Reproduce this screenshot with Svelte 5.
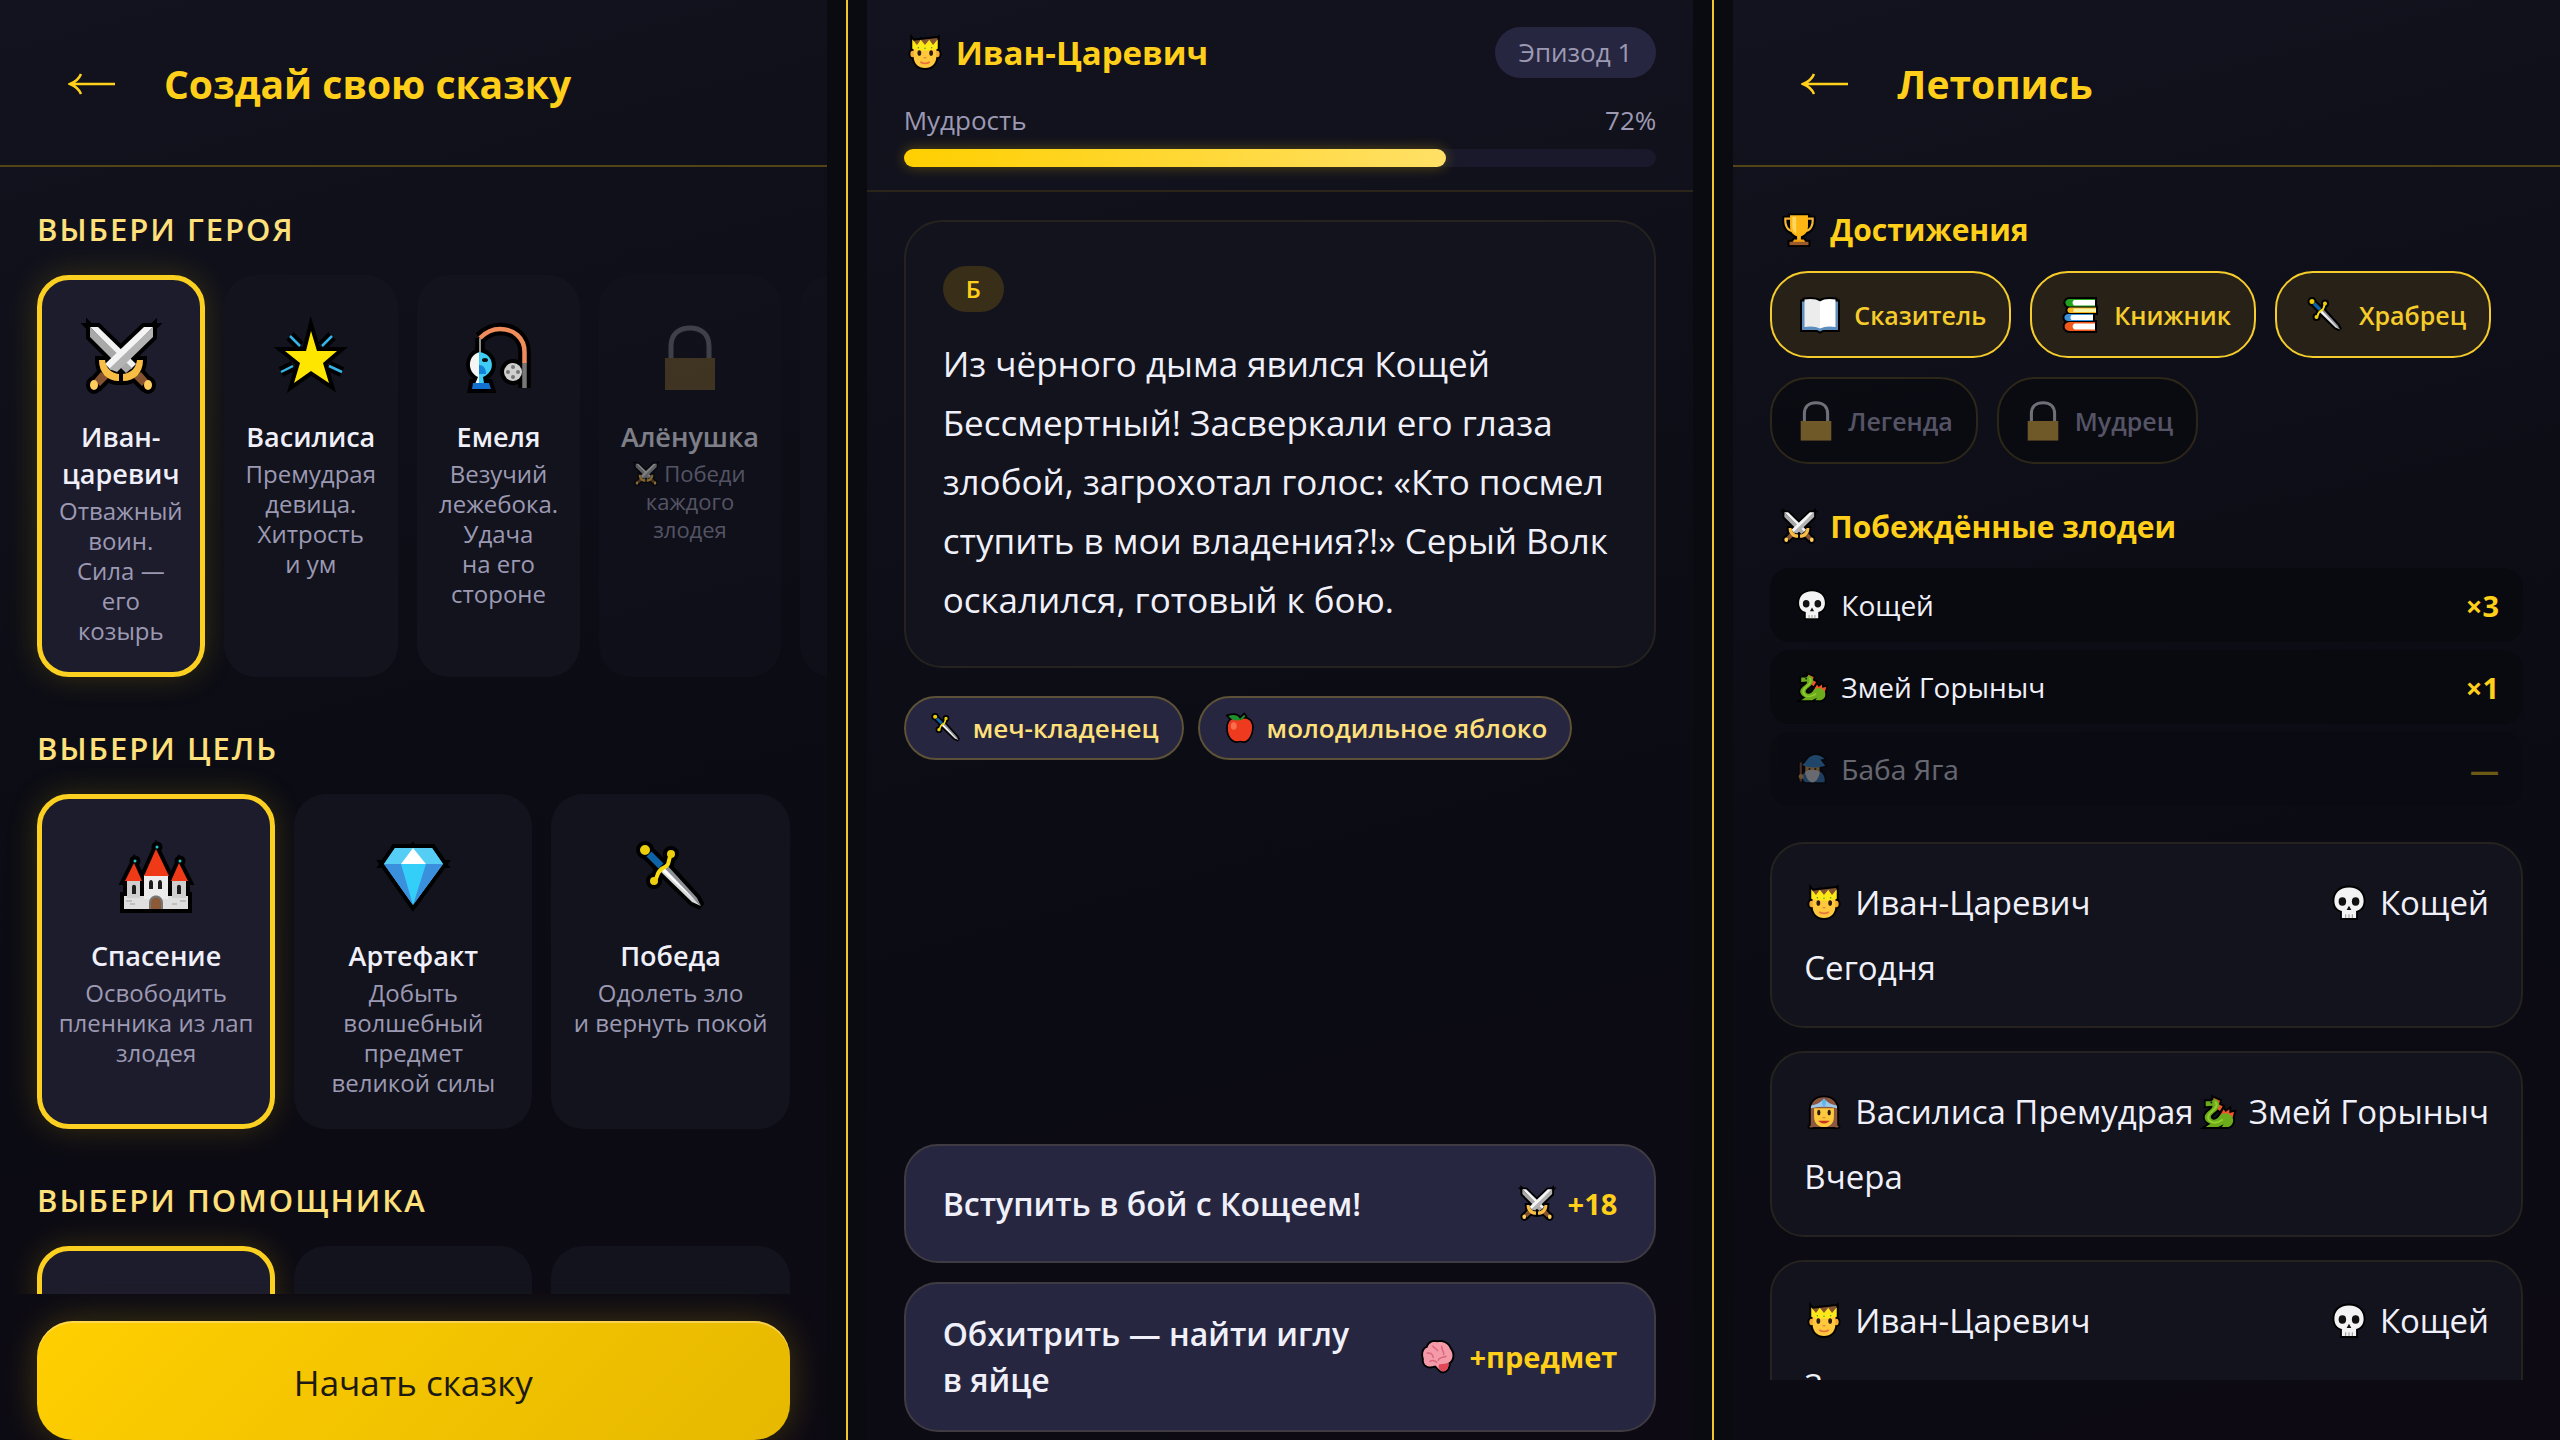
<script>
  const dot = (x, y, rx, ry = rx) =>
    `M${x - rx} ${y}a${rx} ${ry} 0 1 0 ${rx * 2} 0a${rx} ${ry} 0 1 0 ${-rx * 2} 0Z`;

  // every icon is a list of shapes on a 72x72 grid; "w" makes a shape a stroke
  const icons = {
    swords: [
      { d: "M5 5H13L51 42L46 47Z", c: "#f1f1f1" },
      { d: "M5 5L47 46L41 51L5 15Z", c: "#a9a9a9" },
      { d: "M68 5H59L20 42L26 48Z", c: "#f4f4f4" },
      { d: "M68 5V15L32 50L24 47Z", c: "#b3b3b3" },
      { d: "M16 50L23 56L15 64L9 58Z", c: "#85532f" },
      { d: "M56 50L49 56L57 64L63 58Z", c: "#85532f" },
      { d: "M14 38H20C21 46 26 51 34 52V59C22 59 14 51 14 38Z", c: "#f8bd45" },
      { d: "M58 38H52C51 46 46 51 38 52V59C50 59 58 51 58 38Z", c: "#f8bd45" },
      { d: dot(9, 63, 4, 5), c: "#ffce5c" },
      { d: dot(63, 63, 4, 5), c: "#ffce5c" },
    ],
    star: [
      { d: "M36 9L42 29H62L48 41L54 61L36 49L19 61L25 41L10 29H31Z", c: "#ffe600" },
      { d: "M15 14L25 24M57 14L47 24M6 50L18 44M67 50L54 44", c: "#35b4e6", w: 2.5 },
    ],
    fishing: [
      { d: "M17 16V32", c: "#bdbdbd", w: 1.5 },
      { d: "M17 16C24 9 31 7 37 7C51 7 61.500 16 61.500 30V41", c: "#f08d5a", w: 4.5 },
      { d: "M61.500 41V66", c: "#777", w: 4.5 },
      { d: "M17 30C4 33 4 50 15 55L10 67H17Z", c: "#f5f5f5" },
      { d: "M16 30C32 32 33 50 20 55L22 67H16Z", c: "#3fcdf6" },
      { d: "M10 61H26L28 67H9Z", c: "#1370ce" },
      { d: "M16 52V43C20 43 23 46 23 52Z", c: "#1283d8" },
      { d: dot(22, 38, 3, 2), c: "#111" },
      { d: dot(50, 50, 9), c: "#cfcfcf" },
      { d: dot(50, 45, 2) + dot(50, 55, 2) + dot(45, 50, 2) + dot(55, 50, 2), c: "#767676" },
    ],
    lock: [
      { d: "M17 37V24C17 12 25 6 36 6C47 6 55 12 55 24V37", c: "#cfcfd6", w: 5 },
      { d: "M11 36H61V68H11Z", c: "#d1a239" },
    ],
    castle: [
      { d: "M4 55H68V68H4Z", c: "#dfdfdf" },
      { d: "M7 39H20V57H7ZM52 39H66V57H52Z", c: "#cfcfcf" },
      { d: "M24 34H48V58H24Z", c: "#ececec" },
      { d: "M36 8L49 35H24Z", c: "#f03a17" },
      { d: "M14 22L22 40H5ZM59 22L68 40H51Z", c: "#f03a17" },
      { d: "M29 68V62C29 52 43 52 43 62V68Z", c: "#777" },
      { d: "M31 68V62C31 55 41 55 41 62V68Z", c: "#8d5a38" },
      { d: "M29 48V42C29 38 33 38 33 42V48ZM38 48V42C38 38 42 38 42 42V48ZM12 53V46C12 43 16 43 16 46V53ZM57 53V46C57 43 61 43 61 46V53Z", c: "#1c1c1c" },
      { d: dot(37, 6, 1.5) + dot(15, 20, 1.5) + dot(60, 20, 1.5), c: "#2bc4c9" },
      { d: "M6 60H12M10 63H15M52 63H57M60 60H66", c: "#b5b5b5", w: 1.5 },
    ],
    gem: [
      { d: "M18 7H55L66 23L36 64L7 23Z", c: "#33cff8" },
      { d: "M18 7H36L24 23H7ZM36 7H55L66 23H49Z", c: "#55cdf4" },
      { d: "M36 7L49 23H24Z", c: "#fff" },
      { d: "M7 23H24L36 64ZM66 23H49L36 64Z", c: "#3b90dd" },
    ],
    dagger: [
      { d: "M24 29L27 26L66 65L57 61Z", c: "#d9d9d9" },
      { d: "M27 26L31 23L62 57L66 65Z", c: "#8d9096" },
      { d: "M25 28L28 25.500L62 61Z", c: "#fff" },
      { d: "M14 13L26 25", c: "#0e62a6", w: 7 },
      { d: "M36 14C32 20 36 24 28 27C21 31 24 34 20 39", c: "#f8dc12", w: 4 },
      { d: dot(10, 9, 5) + dot(36, 13, 4) + dot(19, 40, 4), c: "#ecce0c" },
    ],
    prince: [
      { d: "M11 10L62 4L60 40H12Z", c: "#85552f" },
      { d: dot(10, 38, 5, 7) + dot(62, 38, 5, 7), c: "#f2ab35" },
      { d: "M12 24H60V44C60 58 50 68 36 68S12 58 12 44Z", c: "#ffc83d" },
      { d: "M9 7L19 19L27 8L36 19L45 8L53 19L63 7V27C46 32 26 32 9 27Z", c: "#ffe817" },
      { d: dot(22, 25, 1.5) + dot(36, 26, 1.5) + dot(50, 25, 1.5), c: "#16a34a" },
      { d: dot(24, 36, 4, 6) + dot(49, 36, 4, 6), c: "#2b1a12" },
      { d: "M33 46H39", c: "#e08a3c", w: 3 },
      { d: "M26 55Q36 61 46 55", c: "#e8743b", w: 4 },
    ],
    princess: [
      { d: "M8 64V32C8 14 20 5 36 5S64 14 64 32V64C70 67 66 70 58 68H14C6 70 2 67 8 64Z", c: "#8b5740" },
      { d: "M15 28H57V46C57 60 48 68 36 68S15 60 15 46Z", c: "#ffc83d" },
      { d: "M9 22Q24 20 31 12H41Q48 20 63 22L64 28Q36 22 8 28Z", c: "#9cc7ea" },
      { d: dot(36, 16, 4, 8), c: "#5eb6ee" },
      { d: dot(25, 37, 3.5, 6) + dot(47, 37, 3.5, 6), c: "#2b1a12" },
      { d: "M33 48H39", c: "#e08a3c", w: 3 },
      { d: "M28 56Q36 62 44 56Z", c: "#c8321f", w: 3 },
    ],
    skull: [
      { d: "M36 3C16 3 5 15 5 31C5 43 11 50 21 53V68H51V53C61 50 67 43 67 31C67 15 56 3 36 3Z", c: "#f3f3f3" },
      { d: dot(22, 33, 8, 9) + dot(50, 33, 8, 9) + "M36 42L41 51H31Z", c: "#111" },
      { d: "M29 60V68M36 60V68M43 60V68", c: "#8a8a8a", w: 2 },
    ],
    dragon: [
      { d: "M26 6L40 12L38 20L46 24L40 34L30 26ZM40 44L48 30L52 36L60 30L60 38L70 36L67 48Z", c: "#f2552c" },
      { d: "M10 13H22L28 8C40 12 42 24 33 33C25 40 18 44 22 50C28 56 36 50 40 43C48 35 62 38 67 48C71 58 64 68 54 68H44L48 62L36 68H10L20 61C8 56 4 46 12 38C18 32 26 28 24 23L10 24Z", c: "#6cab1c" },
      { d: "M30 14C36 20 32 28 24 34C14 41 12 50 20 56C28 61 38 58 46 52", c: "#92cf2b", w: 4 },
      { d: dot(22, 16, 2), c: "#111" },
    ],
    wizard: [
      { d: "M24 68C10 68 10 46 22 42H54C64 46 68 58 66 68Z", c: "#3f86cf" },
      { d: "M20 28H54V50H20Z", c: "#f2b65c" },
      { d: "M12 26C22 22 24 8 36 4C46 0 58 4 66 12L56 13C60 18 64 24 68 28C50 34 26 34 12 26Z", c: "#3f9ae6" },
      { d: "M20 42Q37 34 54 42C54 58 44 68 37 68S20 58 20 42Z", c: "#f4f6f8" },
      { d: dot(30, 36, 2.5) + dot(44, 36, 2.5), c: "#2b1a12" },
      { d: "M9 20V66", c: "#b0603c", w: 5 },
      { d: dot(10, 54, 6), c: "#f2b65c" },
    ],
    trophy: [
      { d: "M19 12H7C6 28 12 37 24 39M53 12H65C66 28 60 37 48 39", c: "#f5b53a", w: 4.5 },
      { d: "M17 5H55V28C55 42 46 48 40 49V58H32V49C26 48 17 42 17 28Z", c: "#fdb614" },
      { d: "M22 8H30V44C24 40 22 34 22 28Z", c: "#ffd75e" },
      { d: "M26 56H46L50 62H22Z", c: "#f0a010" },
      { d: "M16 61H56V68H16Z", c: "#9a5a2c" },
    ],
    book: [
      { d: "M0 9H72V66H42L36 69L30 66H0Z", c: "#5c8fbf" },
      { d: "M5 5Q26 2 36 9V63Q24 57 5 60Z", c: "#ececec" },
      { d: "M67 5Q46 2 36 9V63Q48 57 67 60Z", c: "#fff" },
    ],
    books: [
      { d: "M66 4H15C4 4 4 19 15 19H66Z", c: "#22a31f" },
      { d: "M66 6H24C20 9 20 14 24 17H66Z", c: "#fff" },
      { d: "M68 21H16C9 22 9 31 16 32H68Z", c: "#f5b622" },
      { d: "M68 23H23V30H68Z", c: "#f7f3a8" },
      { d: "M62 34H13C2 34 2 48 13 48H62Z", c: "#3b93dc" },
      { d: "M62 36H19C16 39 16 43 19 46H62Z", c: "#fff" },
      { d: "M66 50H15C2 50 2 68 15 68H66Z", c: "#f0591b" },
      { d: "M66 53H25C20 56 20 62 25 65H66Z", c: "#fff" },
    ],
    apple: [
      { d: "M36 16C52 8 66 18 65 36C64 54 54 69 44 68C40 66 34 66 30 68C18 69 6 54 7 36C6 18 20 8 36 16Z", c: "#ee3b1f" },
      { d: dot(21, 31, 7, 9), c: "#f86f4e" },
      { d: "M37 16C30 20 16 18 8 7C20 3 32 4 37 16ZM36 14L46 4L49 8L39 18Z", c: "#1f8f2e" },
    ],
    brain: [
      { d: "M34 5C46 2 58 8 61 18C70 28 68 44 58 48C60 60 52 68 44 66C36 62 34 56 30 54C14 60 4 52 6 40C2 28 6 18 14 16C16 6 26 2 34 5Z", c: "#f59aa8" },
      { d: "M38 52C46 50 54 50 58 48C60 60 52 68 44 66C38 62 36 58 38 52Z", c: "#e0485a" },
      { d: "M24 12C28 18 34 18 36 24M44 12C42 20 50 24 48 32M12 28C20 26 26 30 26 38M36 44C38 36 46 38 54 34M18 46C24 42 30 44 34 48", c: "#d9687c", w: 3 },
    ],
    wolf: [
      { d: "M16 9L26 20H46L56 9L64 40L36 68L8 40Z", c: "#8a9199" },
    ],
    horse: [
      { d: "M38 9L52 18L60 46L46 68H26L16 40Z", c: "#8a9199" },
    ],
    cat: [
      { d: "M14 18L28 24H44L58 18V50L36 68L12 50Z", c: "#8a9199" },
    ],
  };

  const heroes = [
    { icon: "swords", name: "Иван-царевич", text: "Отважный воин. Сила — его козырь" },
    { icon: "star", name: "Василиса", text: "Премудрая девица. Хитрость и\u00a0ум" },
    { icon: "fishing", name: "Емеля", text: "Везучий лежебока. Удача на\u00a0его стороне" },
    { icon: "lock", name: "Алёнушка", text: "Победи каждого злодея", locked: true },
    { icon: "lock", locked: true },
  ];

  const goals = [
    { icon: "castle", name: "Спасение", text: "Освободить пленника из лап злодея" },
    { icon: "gem", name: "Артефакт", text: "Добыть волшебный предмет великой силы" },
    { icon: "dagger", name: "Победа", text: "Одолеть зло и\u00a0вернуть покой" },
  ];

  const helpers = [{ icon: "wolf" }, { icon: "horse" }, { icon: "cat" }];

  const items = [
    { icon: "dagger", name: "меч-кладенец" },
    { icon: "apple", name: "молодильное яблоко" },
  ];

  const actions = [
    { text: "Вступить в бой с Кощеем!", icon: "swords", bonus: "+18" },
    { text: "Обхитрить — найти иглу в\u00a0яйце", icon: "brain", bonus: "+предмет" },
  ];

  const achievements = [
    { icon: "book", name: "Сказитель" },
    { icon: "books", name: "Книжник" },
    { icon: "dagger", name: "Храбрец" },
    { icon: "lock", name: "Легенда", locked: true },
    { icon: "lock", name: "Мудрец", locked: true },
  ];

  const villains = [
    { icon: "skull", name: "Кощей", count: 3 },
    { icon: "dragon", name: "Змей Горыныч", count: 1 },
    { icon: "wizard", name: "Баба Яга", count: 0 },
  ];

  const tales = [
    { hero: "Иван-Царевич", heroIcon: "prince", villain: "Кощей", villainIcon: "skull", date: "Сегодня" },
    { hero: "Василиса Премудрая", heroIcon: "princess", villain: "Змей Горыныч", villainIcon: "dragon", date: "Вчера" },
    { hero: "Иван-Царевич", heroIcon: "prince", villain: "Кощей", villainIcon: "skull", date: "3 дня назад" },
  ];

  let wisdom = $state(72);
  let hero = $state(0);
  let goal = $state(0);
  let helper = $state(0);
</script>

{#snippet icon(name, size)}
  <svg class="icon {size}" viewBox="0 0 72 72" aria-hidden="true">
    {#if name !== "lock"}
      {#each icons[name] as s}
        <path d={s.d} fill={s.w ? "none" : "#000"} stroke="#000" stroke-width={(s.w || 0) + 8} />
      {/each}
    {/if}
    {#each icons[name] as s}
      <path d={s.d} fill={s.w ? "none" : s.c} stroke={s.w ? s.c : "none"} stroke-width={s.w} />
    {/each}
  </svg>
{/snippet}

{#snippet backArrow()}
  <button class="back" aria-label="Назад">
    <svg viewBox="0 0 48 24" aria-hidden="true">
      <path d="M47 12H3M13 2C11 7 7 10 2 12C7 14 11 17 13 22" />
    </svg>
  </button>
{/snippet}

{#snippet card(item, selected, pick)}
  <button class="card" class:selected class:locked={item.locked} disabled={item.locked} aria-pressed={selected} onclick={pick}>
    <span class="card-icon">{@render icon(item.icon, "xl")}</span>
    {#if item.name}
      <span class="card-name">{item.name}</span>
      <span class="card-text">
        {#if item.locked}{@render icon("swords", "xs")}{/if}
        {item.text}
      </span>
    {/if}
  </button>
{/snippet}

<main class="screens">
  <section class="panel">
    <header class="topbar">
      {@render backArrow()}
      <h1>Создай свою сказку</h1>
    </header>

    <div class="scroll create">
      <div class="group">
        <h2>Выбери героя</h2>
        <div class="heroes">
          {#each heroes as item, i}
            {@render card(item, hero === i, () => (hero = i))}
          {/each}
        </div>
      </div>
      <div class="group">
        <h2>Выбери цель</h2>
        <div class="choices">
          {#each goals as item, i}
            {@render card(item, goal === i, () => (goal = i))}
          {/each}
        </div>
      </div>
      <div class="group">
        <h2>Выбери помощника</h2>
        <div class="choices">
          {#each helpers as item, i}
            {@render card(item, helper === i, () => (helper = i))}
          {/each}
        </div>
      </div>
    </div>

    <footer class="start-bar">
      <button class="start">Начать сказку</button>
    </footer>
  </section>

  <div class="divider"></div>

  <section class="panel">
    <header class="status">
      <div class="status-row">
        <strong class="hero-name">{@render icon("prince", "md")}Иван-Царевич</strong>
        <span class="episode">Эпизод 1</span>
      </div>
      <div class="stat">
        <span id="wisdom">Мудрость</span>
        <span>{wisdom}%</span>
      </div>
      <div class="bar" role="progressbar" aria-labelledby="wisdom" aria-valuenow={wisdom} aria-valuemin="0" aria-valuemax="100">
        <div class="bar-fill" style="width: {wisdom}%"></div>
      </div>
    </header>

    <div class="story">
      <article class="page">
        <span class="kind">Б</span>
        <p>
          Из чёрного дыма явился Кощей Бессмертный! Засверкали его глаза злобой, загрохотал
          голос: «Кто посмел ступить в мои владения?!» Серый Волк оскалился, готовый к бою.
        </p>
      </article>
      <ul class="items">
        {#each items as item}
          <li>{@render icon(item.icon, "sm")}{item.name}</li>
        {/each}
      </ul>
    </div>

    <div class="actions">
      {#each actions as action}
        <button class="action">
          <span>{action.text}</span>
          <strong>{@render icon(action.icon, "md")}{action.bonus}</strong>
        </button>
      {/each}
    </div>
  </section>

  <div class="divider"></div>

  <section class="panel chronicle">
    <header class="topbar">
      {@render backArrow()}
      <h1>Летопись</h1>
    </header>

    <div class="scroll">
      <h3>{@render icon("trophy", "md")}Достижения</h3>
      <ul class="achievements">
        {#each achievements as a}
          <li class:locked={a.locked}>
            {@render icon(a.icon, a.locked ? "padlock" : "lg")}{a.name}
          </li>
        {/each}
      </ul>

      <h3 class="villains-title">{@render icon("swords", "md")}Побеждённые злодеи</h3>
      <ul class="villains">
        {#each villains as v}
          <li class:unmet={!v.count}>
            <span>{@render icon(v.icon, "sm")}{v.name}</span>
            <strong>{v.count ? `×${v.count}` : "—"}</strong>
          </li>
        {/each}
      </ul>

      <div class="tales">
        {#each tales as t}
          <article class="tale">
            <div class="tale-row">
              <span>{@render icon(t.heroIcon, "md")}{t.hero}</span>
              <span>{@render icon(t.villainIcon, "md")}{t.villain}</span>
            </div>
            <div>{t.date}</div>
          </article>
        {/each}
      </div>
    </div>
  </section>
</main>

<style>
  :global(body) {
    background: #090b10;
  }

  .screens {
    display: grid;
    grid-template-columns: minmax(0, 1fr) 2px minmax(0, 1fr) 2px minmax(0, 1fr);
    column-gap: 19px;
    height: 100vh;
    overflow: hidden;
    color: #f0f0fa;
    font-family: "Segoe UI", "Open Sans", "Noto Sans", sans-serif;
  }

  .divider {
    background: #f5c62c;
  }

  .panel {
    display: flex;
    flex-direction: column;
    min-height: 0;
    background: linear-gradient(165deg, #12131e 0%, #0b0c14 50%, #0d0a13 100%);
  }

  button {
    font: inherit;
    color: inherit;
    border: none;
    margin: 0;
    cursor: pointer;
  }

  h1,
  h2,
  h3,
  p,
  ul {
    margin: 0;
    padding: 0;
  }

  ul {
    list-style: none;
  }

  .icon {
    flex: none;
    width: 34px;
    height: 34px;
    overflow: visible;
  }

  .icon.xl {
    width: 72px;
    height: 72px;
  }

  .icon.lg {
    width: 40px;
    height: 36px;
  }

  .icon.sm {
    width: 30px;
    height: 30px;
  }

  .icon.padlock {
    width: 44px;
    height: 44px;
  }

  .icon.xs {
    width: 24px;
    height: 24px;
    vertical-align: -4px;
  }

  /* top bar */
  .topbar {
    display: flex;
    align-items: center;
    gap: 48px;
    height: 163px;
    flex: none;
    padding: 2px 37px 0 68px;
    border-bottom: 2px solid #534415;
  }

  .back {
    background: none;
    padding: 0;
    width: 48px;
    height: 24px;
  }

  .back svg {
    display: block;
    width: 48px;
    height: 24px;
    fill: none;
    stroke: #ffd11a;
    stroke-width: 2.5;
  }

  h1 {
    font-size: 39px;
    font-weight: 700;
    line-height: 54px;
    color: #ffcf1a;
  }

  .scroll {
    flex: 1;
    min-height: 0;
    overflow: hidden;
    padding: 42px 37px 0;
  }

  .create {
    display: flex;
    flex-direction: column;
    gap: 50px;
    padding-top: 41px;
  }

  h2 {
    font-size: 31px;
    font-weight: 600;
    line-height: 42px;
    letter-spacing: 2px;
    text-transform: uppercase;
    color: #ffe07a;
    margin-bottom: 25px;
  }

  .heroes {
    display: flex;
    gap: 19px;
  }

  .choices {
    display: grid;
    grid-template-columns: repeat(3, minmax(0, 1fr));
    gap: 19px;
  }

  .card {
    display: flex;
    flex-direction: column;
    align-items: center;
    padding: 24px 14px 26px;
    background: #12131d;
    border: 5px solid transparent;
    background-clip: border-box;
    border-radius: 32px;
    text-align: center;
  }

  .heroes .card {
    flex: none;
    width: min-content;
    padding-inline: 17px;
  }

  .card.selected {
    background: #1d1c2c;
    border-color: #fbd021;
    box-shadow: 0 0 32px rgba(255, 204, 0, 0.18);
  }

  .card.locked {
    opacity: 0.5;
  }

  .card.locked .card-icon {
    opacity: 0.5;
  }

  .card-icon {
    display: flex;
    align-items: center;
    height: 108px;
    margin-bottom: 6px;
  }

  .card-name {
    font-size: 27px;
    font-weight: 600;
    line-height: 37px;
  }

  .card-text {
    margin-top: 4px;
    font-size: 24px;
    line-height: 30px;
    color: #9c99b3;
  }

  .card.locked .card-text {
    font-size: 22px;
    line-height: 28px;
  }

  .start-bar {
    flex: none;
    padding: 27px 37px 0;
  }

  .start {
    display: block;
    width: 100%;
    height: 119px;
    padding-top: 4px;
    border-radius: 36px;
    background: linear-gradient(135deg, #ffcf00, #e6b800);
    box-shadow: 0 0 36px rgba(255, 204, 0, 0.22), inset 0 2px 0 rgba(255, 224, 130, 0.6);
    color: #1c1a12;
    font-size: 35px;
    font-weight: 500;
  }

  /* story screen */
  .status {
    padding: 27px 37px 23px;
    border-bottom: 2px solid #2b2519;
    background: rgba(20, 20, 32, 0.4);
  }

  .status-row,
  .stat {
    display: flex;
    justify-content: space-between;
    align-items: center;
  }

  .hero-name {
    display: flex;
    align-items: center;
    gap: 14px;
    padding-left: 4px;
    font-size: 33px;
    font-weight: 700;
    color: #ffcf1a;
  }

  .episode {
    padding: 0 24px;
    border-radius: 26px;
    background: #262640;
    font-size: 26px;
    line-height: 51px;
    color: #9c99b3;
  }

  .stat {
    margin: 25px 0 12px;
    font-size: 26px;
    line-height: 34px;
    color: #9c99b3;
  }

  .bar {
    height: 18px;
    border-radius: 9px;
    background: #19192b;
  }

  .bar-fill {
    height: 100%;
    border-radius: 9px;
    background: linear-gradient(90deg, #ffcf00, #ffe066);
    box-shadow: 0 0 14px rgba(255, 204, 0, 0.3);
  }

  .story {
    flex: 1;
    padding: 28px 37px 0;
  }

  .page {
    padding: 44px 37px 37px;
    border: 2px solid #25221f;
    border-radius: 38px;
    background: #12131d;
  }

  .kind {
    display: inline-block;
    padding: 0 23px;
    border-radius: 23px;
    background: #392f19;
    color: #ffcf1a;
    font-size: 24px;
    font-weight: 600;
    line-height: 46px;
  }

  .page p {
    margin-top: 22px;
    font-size: 35px;
    line-height: 59px;
  }

  .items {
    display: flex;
    flex-wrap: wrap;
    gap: 14px;
    margin-top: 28px;
  }

  .items li {
    display: flex;
    align-items: center;
    gap: 12px;
    padding: 0 23px 0 25px;
    border: 2px solid #5d5137;
    border-radius: 32px;
    background: #262640;
    font-size: 26px;
    font-weight: 600;
    line-height: 60px;
    color: #ffe07a;
  }

  .actions {
    display: flex;
    flex-direction: column;
    gap: 19px;
    padding: 0 37px 8px;
  }

  .action {
    display: flex;
    justify-content: space-between;
    align-items: center;
    gap: 40px;
    min-height: 119px;
    padding: 27px 37px;
    border: 2px solid #3e3b42;
    border-radius: 34px;
    background: #262640;
    font-size: 32px;
    font-weight: 600;
    line-height: 46px;
    text-align: left;
  }

  .action span {
    max-width: 440px;
  }

  .action strong {
    display: flex;
    align-items: center;
    gap: 14px;
    font-size: 29px;
    font-weight: 700;
    color: #ffcf1a;
  }

  /* chronicle */
  .chronicle {
    padding-bottom: 60px;
  }

  h3 {
    display: flex;
    align-items: center;
    gap: 14px;
    padding-left: 12px;
    margin-bottom: 20px;
    font-size: 30px;
    font-weight: 700;
    line-height: 42px;
    color: #ffcf1a;
  }

  .achievements {
    display: flex;
    flex-wrap: wrap;
    gap: 19px;
  }

  .achievements li {
    display: flex;
    align-items: center;
    gap: 14px;
    height: 83px;
    padding: 0 23px 0 28px;
    border: 2px solid #f5cc2b;
    border-radius: 38px;
    background: #272118;
    font-size: 25px;
    font-weight: 600;
    color: #f5cc2b;
  }

  .achievements .locked {
    gap: 10px;
    padding-left: 22px;
    border-color: #4c3f1a;
    background: #08080c;
    color: #9c99b3;
    opacity: 0.5;
  }

  .villains-title {
    margin-top: 42px;
  }

  .villains {
    display: grid;
    gap: 8px;
  }

  .villains li {
    display: flex;
    justify-content: space-between;
    align-items: center;
    height: 74px;
    padding: 0 24px 0 27px;
    border-radius: 20px;
    background: #090a10;
    font-size: 28px;
  }

  .villains span {
    display: flex;
    align-items: center;
    gap: 14px;
  }

  .villains strong {
    font-size: 29px;
    font-weight: 700;
    color: #ffcf1a;
  }

  .villains .unmet {
    opacity: 0.4;
  }

  .tales {
    display: grid;
    grid-template-columns: minmax(0, 1fr);
    gap: 23px;
    margin-top: 36px;
  }

  .tale {
    padding: 26px 32px;
    border: 2px solid #25221f;
    border-radius: 34px;
    background: #12131d;
    font-size: 33px;
    line-height: 65px;
    white-space: nowrap;
  }

  .tale-row {
    display: flex;
    justify-content: space-between;
  }

  .tale-row span {
    display: flex;
    align-items: center;
    gap: 14px;
    padding-left: 3px;
  }
</style>
